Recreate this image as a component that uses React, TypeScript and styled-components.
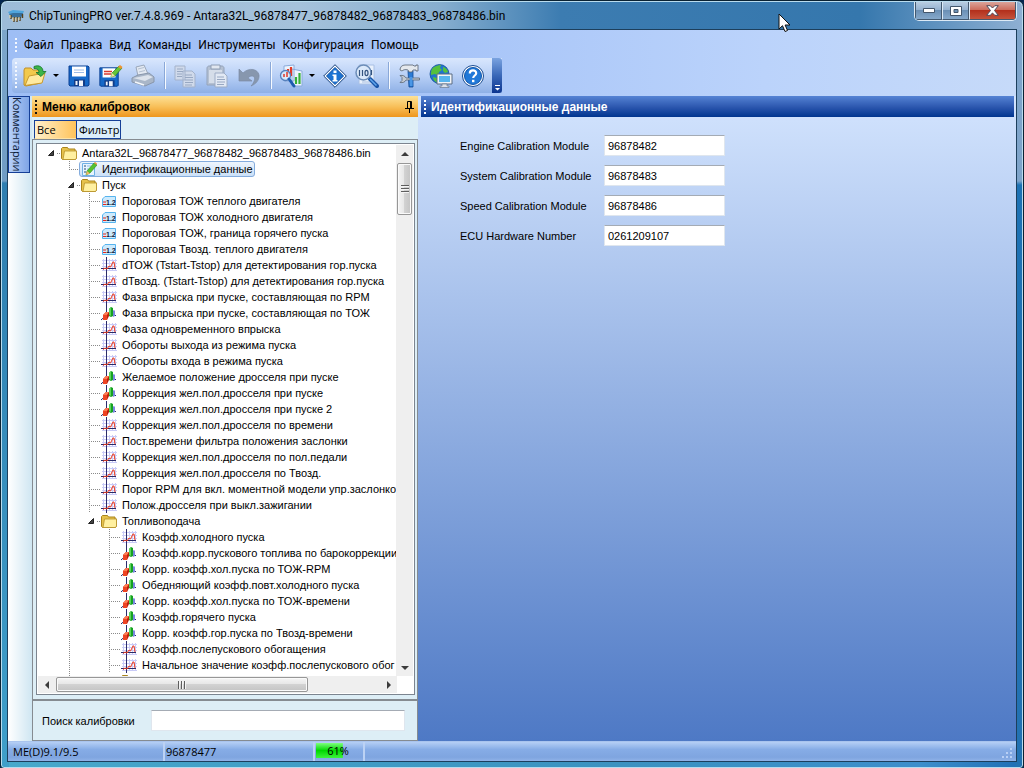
import React from "react";
import styled, { createGlobalStyle, css } from "styled-components";

const uiFont = '"Liberation Sans", Arial, sans-serif';
const menuFont = '"Open Sans", "Noto Sans", sans-serif';
const titleFont = 'Roboto, "Open Sans", sans-serif';

const GlobalStyle = createGlobalStyle`
  *, *::before, *::after { box-sizing: border-box; }
  body { margin: 0; background: #04264f; font: 12px/16px ${uiFont}; color: #000; }
  button, input { font: inherit; color: inherit; margin: 0; padding: 0; border: 0; background: none; border-radius: 0; }
  svg { display: block; flex: none; }
`;

/* ---------- window frame ---------- */

const Frame = styled.div`
  position: relative;
  min-height: 100vh;
  display: flex;
  flex-direction: column;
  padding: 1px 6px 6px 6px;
  border: 1px solid #0a2233;
  border-radius: 7px 7px 4px 4px;
  box-shadow: inset 0 0 0 1px #b9dcee;
  background:
    linear-gradient(90deg, #9dbcd8 0, #a5c2db 300px, #86aecf 440px, #3c7cb1 560px, #3577ad 84%, #6d9bc5 94%, #8fb0d3 100%) top / 100% 29px no-repeat,
    linear-gradient(#7fa8cc 0, #6f9cc4 180px, #2f7eb0 182px, #3f9fca 100%) left / 8px 100% no-repeat,
    linear-gradient(#7ea4ca 0, #7ea4ca 180px, #1d72b4 184px, #2372b2 100%) right / 8px 100% no-repeat,
    linear-gradient(90deg, #48a9cb, #3b92c0 60%, #3d8ecb 90%, #1f6eb4);
`;

const TitleBar = styled.header`
  display: flex;
  height: 27px;
  padding-left: 1px;
  font: 12px/26px ${titleFont};
`;

const Title = styled.h1`
  flex: 1;
  display: flex;
  align-items: center;
  gap: 5px;
  margin: 0;
  font: inherit;
  white-space: nowrap;
`;

const WindowButtons = styled.div`
  display: flex;
  align-self: flex-start;
  height: 19px;
  border: 1px solid #dceaf6;
  border-top: 0;
  border-radius: 0 0 5px 5px;
  overflow: hidden;
`;

const WindowButton = styled.button<{ $close?: boolean }>`
  display: flex;
  align-items: center;
  justify-content: center;
  width: ${(p) => (p.$close ? 47 : 27)}px;
  border: 1px solid #43596f;
  border-top: 0;
  & + & { border-left-color: #dceaf6; }
  background: ${(p) =>
    p.$close
      ? "linear-gradient(#dba49a, #cc6a59 48%, #b3301c 50%, #c5533c)"
      : "linear-gradient(#b9cde1, #94b1cf 48%, #6b90b5 50%, #86a9cb)"};
`;

const Client = styled.div`
  flex: 1;
  display: flex;
  flex-direction: column;
  border: 1px solid #1d3f5c;
  background: linear-gradient(90deg, #9ebef5, #a8c5f8 45%, #bbd3fb 75%, #c6daf9);
`;

/* ---------- menu and toolbar ---------- */

const Grip = styled.span<{ $color?: string; $height: number }>`
  flex: none;
  width: 2px;
  height: ${(p) => p.$height}px;
  background: repeating-linear-gradient(${(p) => p.$color ?? "#f4f8ff"} 0 2px, transparent 2px 4px);
`;

const MenuBar = styled.nav`
  display: flex;
  align-items: center;
  height: 28px;
  padding: 1px 0 0 7px;
  gap: 7px;
  font: 12px/16px ${titleFont};
`;

const MenuItem = styled.button`
  white-space: nowrap;
`;

const ToolBar = styled.div`
  display: flex;
  align-items: center;
  align-self: flex-start;
  height: 35px;
  margin-left: 4px;
  padding-left: 3px;
  border-radius: 4px 0 0 4px;
  background: linear-gradient(#d9e7fd, #b9d0f6 50%, #8eb0e6);
  & > ${Grip} { margin-right: 2px; }
`;

const ToolButton = styled.button<{ $wide?: boolean }>`
  display: flex;
  align-items: center;
  justify-content: space-between;
  width: ${(p) => (p.$wide ? 44 : 32)}px;
  height: 32px;
  padding: 0 4px;
`;

const Separator = styled.span`
  width: 2px;
  height: 27px;
  margin: 0 3px 0 5px;
  border-left: 1px solid #8aa8d8;
  background: #f6faff;
`;

const Overflow = styled.button`
  display: flex;
  align-items: flex-end;
  justify-content: center;
  width: 10px;
  height: 35px;
  margin-left: 3px;
  padding-bottom: 2px;
  border-radius: 0 3px 3px 0;
  background: linear-gradient(#7aa3e0, #3a68b8 50%, #0c3590);
`;

const Arrow = styled.span`
  border: 3px solid transparent;
  border-top-color: #000;
  border-bottom: 0;
`;

/* ---------- work area ---------- */

const Work = styled.div`
  flex: 1;
  display: flex;
  margin-top: 3px;
`;

const SideStrip = styled.aside`
  flex: none;
  width: 24px;
  background: linear-gradient(90deg, #fff, #cfe6f2);
`;

const SideTab = styled.button`
  display: flex;
  justify-content: center;
  width: 22px;
  height: 77px;
  border: 1px solid #153f97;
  background: linear-gradient(90deg, #b7d0f8, #7fa5e6);
  padding: 0 3px 0 0;
  font: 11px/17px ${menuFont};
  color: #0d1c38;
  writing-mode: vertical-rl;
`;

const Panel = styled.section`
  flex: none;
  width: 386px;
  display: flex;
  flex-direction: column;
  background: #ddeef6;
`;

const PanelHeader = styled.h2<{ $blue?: boolean }>`
  display: flex;
  align-items: center;
  gap: 5px;
  height: 21px;
  margin: 0;
  padding: 0 4px 0 3px;
  font: bold 12px/20px ${uiFont};
  color: ${(p) => (p.$blue ? "#fff" : "#000")};
  background: ${(p) => (p.$blue ? "linear-gradient(#5583d4, #2a55ad 55%, #00358f)" : "linear-gradient(#fde196, #f8c05a 50%, #ee961d)")};
`;

const PinButton = styled.button`
  margin-left: auto;
`;

const TabList = styled.div`
  display: flex;
  padding: 3px 0 0 2px;
`;

const Tab = styled.button<{ $active?: boolean }>`
  width: ${(p) => (p.$active ? 42 : 45)}px;
  height: 19px;
  text-align: left;
  padding-left: 2px;
  font: 11px/17px ${menuFont};
  border: 1px solid #153f97;
  ${(p) =>
    p.$active
      ? css`border-bottom-color: #ffe3a4; border-right: 0; background: linear-gradient(90deg, #fff0cc, #ffc35a);`
      : css`background: #ddeefb;`}
`;

const TreeFrame = styled.div`
  flex: 1;
  display: flex;
  padding: 3px 2px 4px 3px;
  border: 1px solid #858b91;
`;

const TreeBox = styled.div`
  flex: 1;
  min-width: 0;
  display: flex;
  flex-direction: column;
  padding: 1px;
  border: 1px solid #7c8590;
  background: #fff;
`;

const TreeBody = styled.div`
  flex: 1;
  display: flex;
`;

const Tree = styled.ul`
  flex: 1 1 0;
  min-width: 0;
  height: calc(100vh - 237px);
  min-height: 200px;
  overflow: hidden;
  margin: 0;
  padding: 0 0 0 3px;
  list-style: none;
`;

const Row = styled.li`
  display: flex;
  align-items: center;
  height: 16px;
  white-space: nowrap;
  font: 11px/16px ${uiFont};
`;

type CellKind = "blank" | "line" | "branch" | "open" | "last";

const Cell = styled.span<{ $kind: CellKind }>`
  flex: none;
  width: 20px;
  height: 16px;
  background-repeat: no-repeat;
  ${(p) =>
    p.$kind === "line" &&
    css`
      background-image: repeating-linear-gradient(#8a8a8a 0 1px, transparent 1px 2px);
      background-size: 1px 16px;
      background-position: 8px 0;
    `}
  ${(p) =>
    (p.$kind === "branch" || p.$kind === "last") &&
    css`
      background-image: repeating-linear-gradient(#8a8a8a 0 1px, transparent 1px 2px),
        repeating-linear-gradient(90deg, #8a8a8a 0 1px, transparent 1px 2px);
      background-size: 1px ${p.$kind === "last" ? 9 : 16}px, 11px 1px;
      background-position: 8px 0, 8px 8px;
    `}
  ${(p) =>
    p.$kind === "open" &&
    css`
      background-image: repeating-linear-gradient(90deg, #8a8a8a 0 1px, transparent 1px 2px);
      background-size: 4px 1px;
      background-position: 16px 8px;
    `}
`;

const Label = styled.span<{ $selected?: boolean }>`
  display: flex;
  align-items: center;
  gap: 5px;
  height: 16px;
  ${(p) =>
    p.$selected &&
    css`
      margin-left: -2px;
      padding: 0 1px;
      border: 1px solid #84acdd;
      border-radius: 3px;
      background: linear-gradient(#eef5fd, #cbe0f8);
    `}
`;

const VScroll = styled.div`
  display: flex;
  flex-direction: column;
  width: 17px;
  background: #efefef;
`;

const HScroll = styled.div`
  display: flex;
  width: 359px;
  height: 17px;
  background: #efefef;
`;

const ScrollButton = styled.button<{ $dir: "up" | "down" | "left" | "right" }>`
  flex: none;
  display: flex;
  align-items: center;
  justify-content: center;
  width: 17px;
  height: 17px;
  ${(p) => (p.$dir === "down" || p.$dir === "right") && css`margin-${p.$dir === "down" ? "top" : "left"}: auto;`}
  & > span {
    border: 4px solid transparent;
    ${(p) =>
      ({
        up: css`border-top: 0; border-bottom-color: #3c3c3c;`,
        down: css`border-bottom: 0; border-top-color: #3c3c3c;`,
        left: css`border-left: 0; border-right-color: #3c3c3c;`,
        right: css`border-right: 0; border-left-color: #3c3c3c;`,
      })[p.$dir]}
  }
`;

const Thumb = styled.div<{ $horizontal?: boolean }>`
  display: flex;
  align-items: center;
  justify-content: center;
  border: 1px solid #979797;
  border-radius: 2px;
  box-shadow: inset 0 0 0 1px #fafafa;
  ${(p) =>
    p.$horizontal
      ? css`width: 252px; height: 15px; margin: 1px; background: linear-gradient(#f5f5f5, #e6e6e6 48%, #d2d2d2 50%, #c4c4c4);`
      : css`width: 15px; height: 52px; margin: 1px; background: linear-gradient(90deg, #f5f5f5, #e6e6e6 48%, #d2d2d2 50%, #c4c4c4);`}
  &::before {
    content: "";
    width: 8px;
    height: 8px;
    background: repeating-linear-gradient(${(p) => (p.$horizontal ? "90deg" : "180deg")}, #5e5e5e 0 1px, #f4f4f4 1px 2px, transparent 2px 3px);
  }
`;

const SearchPanel = styled.div`
  display: flex;
  align-items: center;
  gap: 16px;
  height: 41px;
  padding: 0 12px 0 9px;
  border: 1px solid #858b91;
  font: 11px/16px ${uiFont};
`;

const Field = styled.input`
  height: 21px;
  padding: 0 3px;
  border: 1px solid #dfe6ee;
  border-top-color: #a4abb4;
  background: #fff;
  font: 11px/16px ${uiFont};
`;

const SearchField = styled(Field)`
  flex: 1;
  min-width: 0;
`;

const Details = styled.section`
  flex: 1;
  min-width: 0;
  display: flex;
  flex-direction: column;
  padding: 0 2px 0 3px;
  background: linear-gradient(#d3e4fe, #4e79c5);
`;

const Form = styled.form`
  display: grid;
  grid-template-columns: 144px 121px;
  gap: 9px 0;
  align-items: center;
  padding: 18px 39px;
  font: 11px/16px ${uiFont};
`;

/* ---------- status bar ---------- */

const StatusBar = styled.footer`
  display: flex;
  height: 20px;
  border-top: 1px solid #a9c4ee;
  background: linear-gradient(#b5cff5, #86ace6 40%, #7fa5e0 80%, #8fb2e8);
  font: 11px/20px ${menuFont};
`;

const StatusCell = styled.div<{ $width?: number }>`
  ${(p) => (p.$width ? `width: ${p.$width}px;` : "flex: 1;")}
  padding-left: 1px;
  border-right: ${(p) => (p.$width ? "2px solid #bcd2f4" : "0")};
  &:first-child { padding-left: 5px; }
`;

const Progress = styled.div`
  width: 44px;
  height: 15px;
  margin-top: 1px;
  line-height: 15px;
  text-align: center;
  background: linear-gradient(#7dff7d, #00d800 50%, #3cf43c) left / 61% 100% no-repeat;
`;

const SizeGrip = styled.span`
  align-self: flex-end;
  margin: 0 3px 2px 0;
`;

const Cursor = styled.span`
  position: absolute;
  left: 777px;
  top: 12px;
  pointer-events: none;
`;

/* ---------- icons ---------- */

const Icon24 = ({ children }: { children: React.ReactNode }) => (
  <svg width="24" height="24" viewBox="0 0 24 24" aria-hidden="true">{children}</svg>
);

const ChipIcon = () => (
  <svg width="16" height="14" viewBox="0 0 16 14" aria-hidden="true">
    <path d="M0 3 5 1 16 2 14 7 3 7Z" fill="#4fa5dc" />
    <path d="M1 5 5 4 15 4 13 9 4 9Z" fill="#37709c" />
    <path d="M3 6v4M6 8v5M9 8v5M12 8v4M14.500 5v4" stroke="#54401f" strokeWidth="1.400" />
    <path d="M2 6v3M5 8v4M8 8v4M11 8v3" stroke="#f0d9a0" />
  </svg>
);

const OpenIcon = () => (
  <Icon24>
    <path d="M1 6 2 4h6l2 2h8v13L3 22 1 21Z" fill="#f3c94c" stroke="#c0902a" />
    <path d="M2 21.500 6 12l16-3-3 10Z" fill="#ffeaa0" stroke="#c89a30" />
    <path d="M11 2.500c5-2 9 .5 9 5h3l-5 5-5-4h3c0-2.500-1.500-4-5-4Z" fill="#3bb54a" stroke="#15722a" strokeWidth=".8" />
  </Icon24>
);

const Floppy = () => (
  <>
    <path d="M2 2h19l1 1v18l-1 1H3l-1-1Z" fill="#1568c8" stroke="#0a3f93" />
    <path d="M5 2.500h14v10H5Z" fill="#fff" />
    <path d="M7 15.500h11V22H7Z" fill="#123c87" />
    <path d="M12 16.500h4V22h-4Z" fill="#f2f5fb" />
    <path d="M8.500 17h2v4h-2Z" fill="#f2f5fb" />
  </>
);

const SaveIcon = () => (
  <Icon24>
    <Floppy />
    <path d="M7 6h10M7 8.500h10" stroke="#9dbce6" />
  </Icon24>
);

const SaveAsIcon = () => (
  <Icon24>
    <g transform="translate(-1 2) scale(.92)"><Floppy /></g>
    <path d="M5 7.500h8M5 10h7" stroke="#d93a2f" strokeWidth="1.500" />
    <path d="m12 13 1-4 7-7 3 2-7 8Z" fill="#65c438" stroke="#2d7d20" strokeWidth=".7" />
    <path d="m12 13 1-4 3 3Z" fill="#f6e2a0" />
    <path d="m19 3 2-2 2.500 2L22 5Z" fill="#ef9430" />
  </Icon24>
);

const PrintIcon = () => (
  <Icon24>
    <path d="m7 12-2-9 8-2 4 9Z" fill="#e3e9f2" stroke="#9aa7ba" />
    <path d="m7 5 6-1.500M8 8l6-1.500" stroke="#b4c0d1" />
    <path d="m1 14 6-3 11-2 5 4v5l-9 4-13-4Z" fill="#a9b6c8" stroke="#8896ab" />
    <path d="m2 14 12 3 8-4-5-2-9 2Z" fill="#dde3ec" />
    <path d="m4 18 9 3" stroke="#f4f7fb" strokeWidth="1.500" />
  </Icon24>
);

const CopyIcon = () => (
  <Icon24>
    <path d="M2 2h10v14H2ZM10 7h9l3 3v13H10Z" fill="#d0daeb" stroke="#a3b2cb" />
    <path d="M4 5h6M4 7.500h6M4 10h5M4 12.500h5M12 11h7M12 13.500h8M12 16h8M12 18.500h8M12 21h7" stroke="#98a8c2" />
  </Icon24>
);

const PasteIcon = () => (
  <Icon24>
    <path d="M2 4c0-1 1-2 2-2h13c1 0 2 1 2 2v17H2Z" fill="#b4c0d2" stroke="#94a3ba" />
    <path d="M6 1h9v4H6Z" fill="#e1e7f0" stroke="#8f9eb5" />
    <path d="M4 6h13v13H4Z" fill="#d5dde9" />
    <path d="M10 9h9l3 3v11H10Z" fill="#e2e9f4" stroke="#9dacc5" />
    <path d="M12 13h7M12 15.500h8M12 18h8M12 20.500h7" stroke="#98a8c2" />
  </Icon24>
);

const UndoIcon = () => (
  <Icon24>
    <path d="m2 5 4 4C12 3 21 5 22 11c.5 5-3 9-8 11 4-4 5-10 1-10-2 0-3 1-4 2l4 3H2Z" fill="#8797ae" stroke="#7b8ba4" strokeWidth=".7" />
  </Icon24>
);

const CompareIcon = () => (
  <Icon24>
    <path d="M5 2 15 1v16H5ZM13 5l10 2v15H13Z" fill="#eef4fd" stroke="#89aadb" />
    <path d="M9 5v5M12 3v9" stroke="#e23b28" strokeWidth="2.200" />
    <path d="M17 13v7M20.500 9v11" stroke="#35b03a" strokeWidth="2.200" />
    <circle cx="6.500" cy="11.500" r="5" fill="#d9ebfc" fillOpacity=".85" stroke="#5580bd" strokeWidth="1.300" />
    <path d="M5 13v-3M8 13V8" stroke="#e23b28" strokeWidth="1.500" />
    <path d="m10 15 5 7" stroke="#1d5cb0" strokeWidth="3" strokeLinecap="round" />
  </Icon24>
);

const InfoIcon = () => (
  <Icon24>
    <path d="M12 .7 23.300 12 12 23.300.7 12Z" fill="#fff" stroke="#103c78" />
    <path d="M12 3.500 20.500 12 12 20.500 3.500 12Z" fill="#1b73d2" stroke="#0d4c9f" />
    <path d="M10.500 6.500h3V9h-3ZM9.500 10.500h4v5.500h1v1.500h-5V16h1v-4h-1Z" fill="#fff" />
  </Icon24>
);

const CodeSearchIcon = () => (
  <Icon24>
    <path d="M4 1h15v19H4Z" fill="#e9f1fc" stroke="#a9c0e4" />
    <path d="M7 18h9" stroke="#a9bfdf" />
    <path d="m15 15 7 7" stroke="#1854a8" strokeWidth="4" strokeLinecap="round" />
    <path d="m15 15 6.500 6.500" stroke="#5fa5ec" strokeWidth="1.500" />
    <circle cx="8.500" cy="8.500" r="7.500" fill="#dbe9fa" stroke="#6c8db8" strokeWidth="1.500" />
    <path d="M4.500 6v6M7.500 6v6M16.500 6v5" stroke="#33537f" strokeWidth="1.200" />
    <ellipse cx="11.500" cy="9" rx="1.500" ry="2.600" fill="none" stroke="#33537f" strokeWidth="1.200" />
  </Icon24>
);

const ToolsIcon = () => (
  <Icon24>
    <path d="M11 7h5v16h-4Z" fill="#2c7bd4" stroke="#124a94" strokeWidth=".8" />
    <path d="M3 6c0-3 2-5 5-5h8l1 1h2V1h2v6h-2V6h-3l-1 2h-3l-1-2C8 5 6 6 5 7Z" fill="#e4e8ed" stroke="#56616f" strokeWidth=".8" />
    <path d="M3 11.500c3-.5 5 .5 6 2.500h13.500v2H9c-1 2-3 3-6 2.500l2-2v-3Z" fill="#c3cad3" stroke="#5b6674" strokeWidth=".8" />
    <path d="M12.500 13h3v9h-2.500Z" fill="#4b97e6" />
  </Icon24>
);

const NetworkIcon = () => (
  <Icon24>
    <circle cx="10.500" cy="10" r="9.500" fill="#1f74cf" stroke="#124c97" strokeWidth=".8" />
    <path d="M3 5c2-3 7-4 9-4l-1 3 2 2-3 2-1 4-3-2-4 1c0-2 0-4 1-6ZM14 3c2 0 5 3 5 5l-3 1-2-2ZM4 13l4 1 1 5c-3-1-5-3-5-6Z" fill="#55c03d" />
    <path d="M8 10h15v10H8Z" fill="#f1f4f8" stroke="#5b6c82" />
    <path d="M10 12h11v6H10Z" fill="#58b5ee" />
    <path d="M13 20h5v2h2v1.500h-9V22h2Z" fill="#dbe1e9" stroke="#5b6c82" strokeWidth=".6" />
  </Icon24>
);

const HelpIcon = () => (
  <Icon24>
    <circle cx="12" cy="12" r="10.500" fill="#fff" stroke="#1a4c92" />
    <circle cx="12" cy="12" r="8.500" fill="#2179d8" stroke="#1257ad" />
    <path d="M8.800 9.500c0-4 6.400-4 6.400-.3 0 2.300-3 2.300-3 4.800" fill="none" stroke="#fff" strokeWidth="2.200" />
    <path d="M11 15.800h2.400v2.400H11Z" fill="#fff" />
  </Icon24>
);

const FolderIcon = () => (
  <svg width="16" height="14" viewBox="0 0 16 14" aria-hidden="true">
    <path d="M.5 2.500 1.500 1.500h5l1 1.500H14v2h1.500v7l-1 1.500h-13l-1-1Z" fill="#e6c24c" stroke="#a9841c" />
    <path d="M3.500 5h12v7l-1 1.500H2Z" fill="#fff0a0" stroke="#b8922a" strokeWidth=".8" />
  </svg>
);

const NoteIcon = () => (
  <svg width="16" height="14" viewBox="0 0 16 14" aria-hidden="true">
    <path d="M1.500 1.500h12v12h-12Z" fill="#e7f4ff" stroke="#6fb2e6" />
    <path d="M3 4h2M3 7h2M3 10h2" stroke="#2b4a72" />
    <path d="M6 4h4M6 7h2" stroke="#8cc0ea" />
    <path d="m5 13 1-4 7-8 3 2-7 8Z" fill="#57c22e" stroke="#2e8a1e" strokeWidth=".6" />
    <path d="m5 13 1-4 3 2.500Z" fill="#f3b66a" />
    <path d="m13 1 1-1 2 1.500-.5 1.500Z" fill="#ef8e3a" />
  </svg>
);

const ValueIcon = () => (
  <svg width="16" height="14" viewBox="0 0 16 14" aria-hidden="true">
    <path d="M4 2.500h10.500v10h-13V5Z" fill="#cdeafd" stroke="#56b4ee" />
    <path d="M2 8h3M2 10.500h3" stroke="#e8251d" strokeWidth="1.200" />
    <text x="5" y="11" fontFamily="Liberation Sans, sans-serif" fontWeight="bold" fontSize="7" fill="#10203c">1.2</text>
  </svg>
);

const CurveIcon = () => (
  <svg width="16" height="16" viewBox="0 0 16 16" aria-hidden="true">
    <path d="M2.500 2v12M8.500 2v12M11.500 2v12M14.500 2v12M1 3.500h15M1 6.500h15M1 9.500h15M1 13.500h15" stroke="#c9cbf7" />
    <path d="M5.500 0v16M0 11.500h15" stroke="#2b2b6b" />
    <path d="m2 12.500 2-1.500 2 1 2-3 1.500 1 2.500-5h1l1 6" fill="none" stroke="#ee3a1c" />
  </svg>
);

const SurfaceIcon = () => (
  <svg width="16" height="16" viewBox="0 0 16 16" aria-hidden="true">
    <path d="M5.500 0v9M0 15l5-4.500h10" fill="none" stroke="#2b2b6b" />
    <path d="m11.500 6 1.500-1 1 1v5l-2 1Z" fill="#7a86e0" />
    <path d="m8 4 2-2 2 1v8l-2 1-2-1Z" fill="#16a022" />
    <path d="m8 4 2-2v9l-2-1Z" fill="#5bd65a" />
    <path d="m2 10 3-3h3v4l-2 4H2Z" fill="#b8200c" />
    <path d="M2 10h4v5H2Z" fill="#ee4424" />
    <path d="m2 10 3-3h3l-2 3Z" fill="#ff7a50" />
  </svg>
);

const Expander = () => (
  <svg width="20" height="16" viewBox="0 0 20 16" aria-hidden="true">
    <path d="M12.500 5.500v5h-5Z" fill="#444" stroke="#222" />
  </svg>
);

/* ---------- data ---------- */

const icons = { folder: FolderIcon, note: NoteIcon, value: ValueIcon, curve: CurveIcon, surface: SurfaceIcon };
type IconName = keyof typeof icons;
type Item = [level: number, icon: IconName, label: string];

const items: Item[] = [
  [0, "folder", "Antara32L_96878477_96878482_96878483_96878486.bin"],
  [1, "note", "Идентификационные данные"],
  [1, "folder", "Пуск"],
  [2, "value", "Пороговая ТОЖ теплого двигателя"],
  [2, "value", "Пороговая ТОЖ холодного двигателя"],
  [2, "value", "Пороговая ТОЖ, граница горячего пуска"],
  [2, "value", "Пороговая Твозд. теплого двигателя"],
  [2, "curve", "dТОЖ (Tstart-Tstop) для детектирования гор.пуска"],
  [2, "curve", "dТвозд. (Tstart-Tstop) для детектирования гор.пуска"],
  [2, "curve", "Фаза впрыска при пуске, составляющая по RPM"],
  [2, "surface", "Фаза впрыска при пуске, составляющая по ТОЖ"],
  [2, "curve", "Фаза одновременного впрыска"],
  [2, "curve", "Обороты выхода из режима пуска"],
  [2, "curve", "Обороты входа в режима пуска"],
  [2, "surface", "Желаемое положение дросселя при пуске"],
  [2, "surface", "Коррекция жел.пол.дросселя при пуске"],
  [2, "surface", "Коррекция жел.пол.дросселя при пуске 2"],
  [2, "curve", "Коррекция жел.пол.дросселя по времени"],
  [2, "curve", "Пост.времени фильтра положения заслонки"],
  [2, "curve", "Коррекция жел.пол.дросселя по пол.педали"],
  [2, "curve", "Коррекция жел.пол.дросселя по Твозд."],
  [2, "curve", "Порог RPM для вкл. моментной модели упр.заслонко"],
  [2, "curve", "Полож.дросселя при выкл.зажигании"],
  [2, "folder", "Топливоподача"],
  [3, "curve", "Коэфф.холодного пуска"],
  [3, "surface", "Коэфф.корр.пускового топлива по барокоррекции"],
  [3, "surface", "Корр. коэфф.хол.пуска по ТОЖ-RPM"],
  [3, "surface", "Обедняющий коэфф.повт.холодного пуска"],
  [3, "surface", "Корр. коэфф.хол.пуска по ТОЖ-времени"],
  [3, "surface", "Коэфф.горячего пуска"],
  [3, "surface", "Корр. коэфф.гор.пуска по Твозд-времени"],
  [3, "curve", "Коэфф.послепускового обогащения"],
  [3, "curve", "Начальное значение коэфф.послепускового обог"],
  [3, "folder", ""],
];

const modules = [
  ["Engine Calibration Module", "96878482"],
  ["System Calibration Module", "96878483"],
  ["Speed Calibration Module", "96878486"],
  ["ECU Hardware Number", "0261209107"],
];

const menu = ["Файл", "Правка", "Вид", "Команды", "Инструменты", "Конфигурация", "Помощь"];

const TreeRow = ({ item: [level, icon, label] }: { item: Item }) => {
  const Picture = icons[icon];
  const isFolder = icon === "folder";
  return (
    <Row role="treeitem" aria-level={level + 1} aria-selected={icon === "note"}>
      {Array.from({ length: level }, (_, i) => (
        <Cell key={i} $kind={i === 1 ? "line" : "blank"} />
      ))}
      <Cell $kind={isFolder ? "open" : icon === "note" ? "last" : "branch"}>{isFolder && <Expander />}</Cell>
      <Label $selected={icon === "note"}>
        <Picture />
        {label}
      </Label>
    </Row>
  );
};

export default function App() {
  return (
    <Frame>
      <GlobalStyle />
      <TitleBar>
        <Title>
          <ChipIcon />
          ChipTuningPRO ver.7.4.8.969 - Antara32L_96878477_96878482_96878483_96878486.bin
        </Title>
        <WindowButtons>
          <WindowButton aria-label="Свернуть">
            <svg width="12" height="5" viewBox="0 0 12 5"><path d="M.5.5h11v4H.5Z" fill="#fff" stroke="#43566b" /></svg>
          </WindowButton>
          <WindowButton aria-label="Развернуть">
            <svg width="12" height="10" viewBox="0 0 12 10"><path d="M.5.5h11v9H.5ZM4 3.500h4v3H4Z" fill="#fff" fillRule="evenodd" stroke="#43566b" /></svg>
          </WindowButton>
          <WindowButton $close aria-label="Закрыть">
            <svg width="13" height="11" viewBox="0 0 13 11"><path d="M.7.700h3.500L6.500 3 8.800.7h3.500L8.500 5.500l3.800 4.800H8.800L6.500 8l-2.300 2.300H.7l3.800-4.800Z" fill="#fff" stroke="#4e4858" /></svg>
          </WindowButton>
        </WindowButtons>
      </TitleBar>

      <Client>
        <MenuBar>
          <Grip $height={14} />
          {menu.map((name) => <MenuItem key={name}>{name}</MenuItem>)}
        </MenuBar>

        <ToolBar role="toolbar">
          <Grip $height={27} />
          <ToolButton $wide aria-label="Открыть"><OpenIcon /><Arrow /></ToolButton>
          <ToolButton aria-label="Сохранить"><SaveIcon /></ToolButton>
          <ToolButton aria-label="Сохранить как"><SaveAsIcon /></ToolButton>
          <ToolButton aria-label="Печать"><PrintIcon /></ToolButton>
          <Separator />
          <ToolButton aria-label="Копировать"><CopyIcon /></ToolButton>
          <ToolButton aria-label="Вставить"><PasteIcon /></ToolButton>
          <ToolButton aria-label="Отменить"><UndoIcon /></ToolButton>
          <Separator />
          <ToolButton $wide aria-label="Сравнить"><CompareIcon /><Arrow /></ToolButton>
          <ToolButton aria-label="Информация"><InfoIcon /></ToolButton>
          <ToolButton aria-label="Поиск"><CodeSearchIcon /></ToolButton>
          <Separator />
          <ToolButton aria-label="Настройки"><ToolsIcon /></ToolButton>
          <ToolButton aria-label="Сеть"><NetworkIcon /></ToolButton>
          <ToolButton aria-label="Справка"><HelpIcon /></ToolButton>
          <Overflow aria-label="Ещё">
            <svg width="7" height="7" viewBox="0 0 7 7"><path d="M1 1h5v1H1ZM1 4h5L3.500 6.500Z" fill="#fff" /></svg>
          </Overflow>
        </ToolBar>

        <Work>
          <SideStrip>
            <SideTab>Комментарии</SideTab>
          </SideStrip>

          <Panel>
            <PanelHeader>
              <Grip $height={14} $color="#111" />
              Меню калибровок
              <PinButton aria-label="Закрепить">
                <svg width="9" height="12" viewBox="0 0 9 12"><path d="M2.500 7V.5h4V7M0 7.500h9M4.500 8v4M5.500 1v6" fill="none" stroke="#000" /></svg>
              </PinButton>
            </PanelHeader>
            <TabList role="tablist">
              <Tab role="tab" aria-selected="true" $active>Все</Tab>
              <Tab role="tab" aria-selected="false">Фильтр</Tab>
            </TabList>
            <TreeFrame>
              <TreeBox>
                <TreeBody>
                  <Tree role="tree">
                    {items.map((item, i) => <TreeRow key={i} item={item} />)}
                  </Tree>
                  <VScroll>
                    <ScrollButton $dir="up" aria-label="Вверх"><span /></ScrollButton>
                    <Thumb />
                    <ScrollButton $dir="down" aria-label="Вниз"><span /></ScrollButton>
                  </VScroll>
                </TreeBody>
                <HScroll>
                  <ScrollButton $dir="left" aria-label="Влево"><span /></ScrollButton>
                  <Thumb $horizontal />
                  <ScrollButton $dir="right" aria-label="Вправо"><span /></ScrollButton>
                </HScroll>
              </TreeBox>
            </TreeFrame>
            <SearchPanel>
              <label htmlFor="search">Поиск калибровки</label>
              <SearchField id="search" />
            </SearchPanel>
          </Panel>

          <Details>
            <PanelHeader $blue>
              <Grip $height={14} $color="#fff" />
              Идентификационные данные
            </PanelHeader>
            <Form>
              {modules.map(([name, value], i) => (
                <React.Fragment key={name}>
                  <label htmlFor={`module-${i}`}>{name}</label>
                  <Field id={`module-${i}`} defaultValue={value} />
                </React.Fragment>
              ))}
            </Form>
          </Details>
        </Work>

        <StatusBar>
          <StatusCell $width={157}>ME(D)9.1/9.5</StatusCell>
          <StatusCell $width={150}>96878477</StatusCell>
          <StatusCell $width={50}><Progress role="progressbar" aria-valuenow={61}>61%</Progress></StatusCell>
          <StatusCell />
          <SizeGrip>
            <svg width="11" height="11" viewBox="0 0 11 11"><path d="M8 0h2v2H8ZM4 4h2v2H4ZM8 4h2v2H8ZM0 8h2v2H0ZM4 8h2v2H4ZM8 8h2v2H8Z" fill="#b9d0f5" /></svg>
          </SizeGrip>
        </StatusBar>
      </Client>

      <Cursor>
        <svg width="13" height="20" viewBox="0 0 13 20"><path d="M1 1v15l3.500-3.300L7 18.500l2.500-1-2.400-5.500H12Z" fill="#fff" stroke="#111" /></svg>
      </Cursor>
    </Frame>
  );
}
